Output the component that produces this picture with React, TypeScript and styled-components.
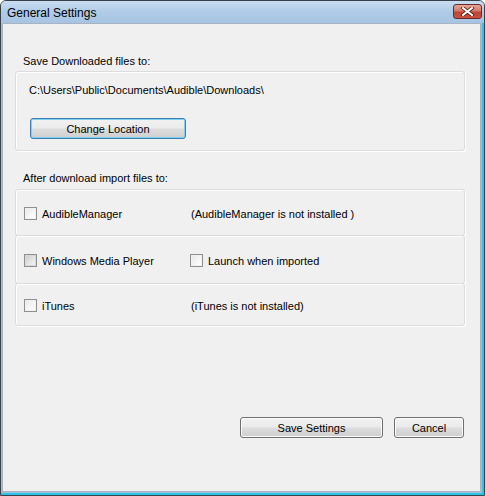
import React from 'react';
import styled, { createGlobalStyle } from 'styled-components';

const GlobalStyle = createGlobalStyle`
  html, body {
    margin: 0;
    padding: 0;
    background: #ffffff;
  }
  body {
    font-family: "Liberation Sans", Arial, sans-serif;
    font-size: 11px;
    color: #000000;
  }
`;

const Window = styled.div`
  width: 485px;
  height: 496px;
  box-sizing: border-box;
  border: 1px solid #39414b;
  border-radius: 6px 6px 0 0;
  background: linear-gradient(90deg, #b4cfe9 0%, #c3d9ee 60%, #9ccde9 100%);
  display: flex;
  flex-direction: column;
  overflow: hidden;
`;

const TitleBar = styled.div`
  height: 22px;
  flex: none;
  display: flex;
  align-items: center;
  justify-content: space-between;
  padding: 0 2px 0 6px;
  background: linear-gradient(180deg, #c9ddf1 0%, #b0cbe6 50%, #a6c4e3 100%);
`;

const Title = styled.span`
  font-size: 12px;
  color: #000;
  padding-top: 1px;
`;

const CloseButton = styled.div`
  width: 29px;
  height: 15px;
  margin-top: -2px;
  box-sizing: border-box;
  border: 1px solid #6d2a2a;
  border-radius: 3px;
  background: linear-gradient(180deg, #e8a493 0%, #d37a6a 45%, #be4434 55%, #c5533f 100%);
  display: flex;
  align-items: center;
  justify-content: center;
`;

const Frame = styled.div`
  flex: 1;
  display: flex;
  padding: 0 1px 1px 1px;
  border-right: 2px solid #2bc3e6;
  border-bottom: 2px solid #2bc3e6;
  background: #9fc0df;
`;

const Client = styled.div`
  flex: 1;
  background: #f0f0f0;
  border: 1px solid #a9b4c0;
  display: flex;
  flex-direction: column;
  padding: 29px 15px 0 12px;
`;

const SectionLabel = styled.div`
  padding-left: 8px;
  height: 16px;
  line-height: 16px;
`;

const GroupBox = styled.div`
  margin-top: 2px;
  border: 1px solid #dcdcdc;
  border-radius: 3px;
  box-shadow: inset 1px 1px 0 #ffffff, 1px 1px 0 #ffffff;
  display: flex;
  flex-direction: column;
`;

const PathBox = styled(GroupBox)`
  height: 80px;
  box-sizing: border-box;
  padding: 10px 0 0 13px;
`;

const PathText = styled.div`
  height: 16px;
  line-height: 16px;
`;

const Button = styled.button<{ $w: number; $focused?: boolean }>`
  width: ${(p) => p.$w}px;
  height: 21px;
  box-sizing: border-box;
  border: 1px solid ${(p) => (p.$focused ? '#3c7fb1' : '#707070')};
  border-radius: 3px;
  background: linear-gradient(180deg, #f2f2f2 0%, #ebebeb 48%, #dddddd 52%, #cfcfcf 100%);
  box-shadow: inset 0 0 0 1px ${(p) => (p.$focused ? '#7fd0f3' : '#fbfbfb')};
  font-family: inherit;
  font-size: 11px;
  color: #000;
  padding: 0;
`;

const ChangeButton = styled(Button)`
  margin-top: 20px;
  margin-left: 1px;
`;

const Spacer = styled.div<{ $h: number }>`
  height: ${(p) => p.$h}px;
  flex: none;
`;

const Row = styled.div<{ $h: number }>`
  height: ${(p) => p.$h}px;
  box-sizing: border-box;
  display: grid;
  grid-template-columns: 166px 1fr;
  align-items: center;
  padding-left: 8px;
  padding-top: 2px;
  border: 1px solid #dcdcdc;
  border-radius: 3px;
  box-shadow: inset 1px 1px 0 #ffffff, 1px 1px 0 #ffffff;
  margin-top: -1px;
`;

const Check = styled.label`
  display: flex;
  align-items: center;
  gap: 5px;
`;

const Box = styled.span<{ $grey?: boolean }>`
  width: 13px;
  height: 13px;
  box-sizing: border-box;
  border: 1px solid #8f8f8f;
  background: ${(p) =>
    p.$grey
      ? 'linear-gradient(135deg, #c9c9c9 0%, #e7e7e7 60%, #f4f4f4 100%)'
      : 'linear-gradient(135deg, #e6e6e6 0%, #f7f7f7 60%, #ffffff 100%)'};
  box-shadow: inset 0 0 0 1px ${(p) => (p.$grey ? '#d8d8d8' : '#f1f1f1')};
  flex: none;
`;

const Note = styled.span`
  padding-left: 1px;
`;

const Footer = styled.div`
  margin-top: 91px;
  display: flex;
  justify-content: flex-end;
  gap: 11px;
  padding-right: 1px;
`;

const CloseGlyph = () => (
  <svg width="15" height="9" viewBox="0 0 15 9">
    <path
      d="M3 1 L12 8 M12 1 L3 8"
      stroke="#5a1a14"
      strokeWidth="3.6"
      strokeLinecap="square"
    />
    <path d="M3 1 L12 8 M12 1 L3 8" stroke="#ffffff" strokeWidth="2" strokeLinecap="square" />
  </svg>
);

export default function App() {
  return (
    <>
      <GlobalStyle />
      <Window>
        <TitleBar>
          <Title>General Settings</Title>
          <CloseButton>
            <CloseGlyph />
          </CloseButton>
        </TitleBar>
        <Frame>
          <Client>
            <SectionLabel>Save Downloaded files to:</SectionLabel>
            <PathBox>
              <PathText>C:\Users\Public\Documents\Audible\Downloads\</PathText>
              <ChangeButton $w={156} $focused>
                Change Location
              </ChangeButton>
            </PathBox>
            <Spacer $h={19} />
            <SectionLabel>After download import files to:</SectionLabel>
            <Spacer $h={4} />
            <Row $h={47}>
              <Check>
                <Box />
                AudibleManager
              </Check>
              <Note>(AudibleManager is not installed )</Note>
            </Row>
            <Row $h={49}>
              <Check>
                <Box $grey />
                Windows Media Player
              </Check>
              <Check>
                <Box />
                Launch when imported
              </Check>
            </Row>
            <Row $h={43}>
              <Check>
                <Box />
                iTunes
              </Check>
              <Note>(iTunes is not installed)</Note>
            </Row>
            <Footer>
              <Button $w={143}>Save Settings</Button>
              <Button $w={70}>Cancel</Button>
            </Footer>
          </Client>
        </Frame>
      </Window>
    </>
  );
}
